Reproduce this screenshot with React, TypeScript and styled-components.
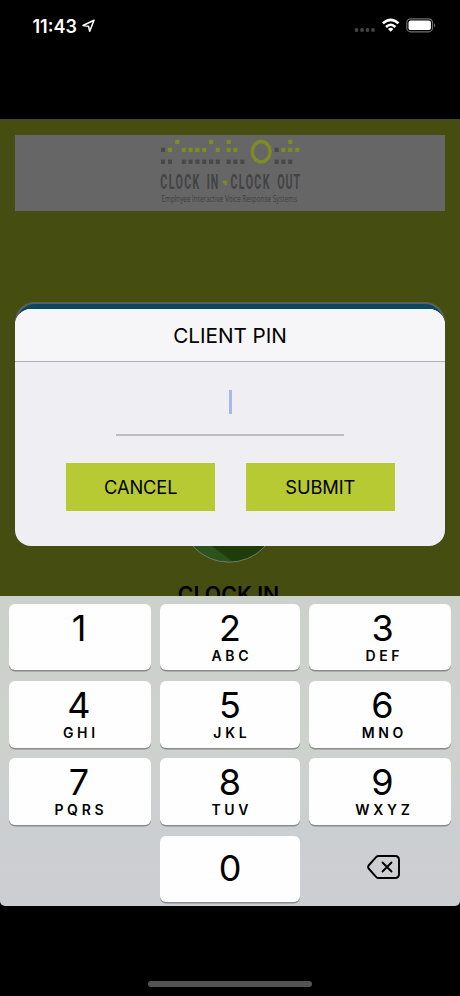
import React from "react";
import styled, { createGlobalStyle } from "styled-components";

const GlobalStyle = createGlobalStyle`
  * { box-sizing: border-box; }
  body { margin: 0; background: #000; }
`;

const Phone = styled.div`
  width: 460px;
  height: 996px;
  display: flex;
  flex-direction: column;
  overflow: hidden;
  background: #000;
  color: #000;
  font-family: Inter, sans-serif;
`;

const StatusBar = styled.header`
  height: 119px;
  flex: none;
  display: flex;
  justify-content: space-between;
  align-items: flex-start;
  padding: 15px 23px 0 32.5px;
  color: #fff;
`;

const StatusGroup = styled.div`
  display: flex;
  align-items: center;
  height: 22px;
`;

const Time = styled.span`
  font-size: 18px;
  font-weight: 600;
  letter-spacing: 0;
  width: 49.5px;
  white-space: nowrap;
`;

const AppScreen = styled.main`
  position: relative;
  height: 477px;
  flex: none;
  overflow: hidden;
  padding: 16px 15px 0;
  background: #454e10;
`;

const Banner = styled.div`
  height: 76px;
  display: flex;
  justify-content: center;
  background: #666;
`;

const LoginCard = styled.section`
  height: 200px;
  margin-top: 91px;
  border: 2px solid #5d6061;
  border-radius: 20px;
  background: #0b475e;
`;

const ClockInBadge = styled.div`
  position: absolute;
  left: 180px;
  top: 345px;
  width: 98px;
  height: 99px;
`;

const ClockInLabel = styled.div`
  position: absolute;
  left: 0;
  right: 3px;
  top: 461px;
  text-align: center;
  font-size: 21.3px;
  line-height: 28px;
  font-weight: 600;
`;

const Dialog = styled.section`
  position: absolute;
  left: 15px;
  right: 15px;
  top: 190px;
  height: 237px;
  overflow: hidden;
  border-radius: 16px;
  background: #efeff3;
  display: flex;
  flex-direction: column;
  align-items: center;
`;

const DialogTitle = styled.h1`
  margin: 0;
  width: 100%;
  height: 53px;
  border-bottom: 1.5px solid #b0b1b3;
  background: #f6f6f9;
  text-align: center;
  font-size: 20.7px;
  font-weight: 400;
  line-height: 53px;
  letter-spacing: -0.05px;
`;

const PinField = styled.div`
  width: 228px;
  height: 74px;
  display: flex;
  justify-content: center;
  padding-top: 28px;
  border-bottom: 2px solid #bcbcc1;
`;

const Caret = styled.span`
  width: 3px;
  height: 24px;
  background: #a9b6ee;
`;

const Actions = styled.div`
  display: flex;
  gap: 30.5px;
  margin: 27px 0 0 1px;
`;

const ActionButton = styled.button`
  width: 149px;
  height: 48px;
  padding: 0;
  border: 0;
  background: #b8ca33;
  color: #000;
  font: 400 18.3px/48px Inter, sans-serif;
  letter-spacing: -0.1px;
`;

const Keyboard = styled.div`
  height: 310px;
  flex: none;
  display: grid;
  grid-template-columns: 142px 140px 142px;
  grid-template-rows: 66px 67px 67px 66px;
  column-gap: 9px;
  row-gap: 10.5px;
  padding: 8px 9px 0;
  border-radius: 0 0 5px 5px;
  background: linear-gradient(#cdd1cc 0%, #cdd2cd 48%, #cccfd1 76%, #cdced2 100%);
`;

const Key = styled.button<{ $plain?: boolean; $column?: number }>`
  ${(p) => (p.$column ? `grid-column: ${p.$column};` : "")}
  display: flex;
  flex-direction: column;
  align-items: center;
  justify-content: ${(p) => (p.$plain ? "center" : "flex-start")};
  padding: ${(p) => (p.$plain ? "0 0 3px 8px" : "0")};
  border: 0;
  border-radius: 6px;
  color: #000;
  background: ${(p) => (p.$plain ? "transparent" : "#fefefe")};
  box-shadow: ${(p) => (p.$plain ? "none" : "0 1.5px 0 #898c8b")};

  &:nth-child(3n + 1):not(:nth-child(10)) { padding-right: 2px; }
  &:nth-child(3n):not(:nth-child(12)) { padding-left: 5px; }
`;

const Digit = styled.span<{ $alone?: boolean }>`
  margin-top: ${(p) => (p.$alone ? "10px" : "2px")};
  font: 400 36px/44px Inter, sans-serif;
  height: 44px;
`;

const Letters = styled.span`
  font: 600 14px/17px Inter, sans-serif;
  letter-spacing: 3.7px;
  margin-right: -3.7px;
  margin-top: -3px;
`;

const HomeArea = styled.footer`
  flex: 1;
  display: flex;
  justify-content: center;
  align-items: flex-end;
  padding-bottom: 9px;
`;

const HomeIndicator = styled.div`
  width: 164px;
  height: 6px;
  border-radius: 3px;
  background: #545454;
`;

const LocationIcon = () => (
  <svg width="13" height="14" viewBox="0 0 13 14">
    <path d="M1 6.5 12 1.2 7.7 12.2 6.5 7.2Z" fill="none" stroke="#fff" strokeWidth="1.5" strokeLinejoin="round" />
  </svg>
);

const StatusIcons = () => (
  <svg width="84" height="22" viewBox="353 15 84 22">
    {[356.5, 362, 367.5, 373].map((x) => (
      <circle key={x} cx={x} cy="30" r="1.9" fill="#454545" />
    ))}
    <g fill="none" stroke="#fff" strokeWidth="2.6">
      <path d="M382.9 23.4Q390.7 16.2 398.5 23.4" />
      <path d="M386 27Q390.7 22.5 395.4 27" />
    </g>
    <path d="M388 29Q390.7 26.7 393.4 29L390.7 31.8Z" fill="#fff" />
    <rect x="406.8" y="18.8" width="25.7" height="13" rx="3.8" fill="none" stroke="#707070" strokeWidth="1.2" />
    <rect x="408.5" y="20.5" width="22.4" height="9.6" rx="2.2" fill="#fff" />
    <path d="M434 23.2Q436.4 25.3 434 27.5Z" fill="#707070" />
  </svg>
);

const GREEN = "#7f8c22";
const GREY = "#484848";
const topSquares = [25.2, 59.1, 76.6, 138.2];
const middleSquares: [number, string][] = [
  [11, GREY], [18, GREEN], [31.8, GREEN], [38.6, GREEN], [45.4, GREEN], [52.2, GREEN],
  [65.8, GREEN], [76.6, GREEN], [83.4, GREEN], [124.6, GREY], [131.4, GREEN], [138.2, GREEN], [145.2, GREEN],
];
const bottomSquares = [11, 18, 31.8, 38.6, 45.4, 52.2, 59.1, 65.8, 76.6, 83.4, 90.4, 124.6, 131.4, 138.2];
const logoWords: [string, number, number][] = [
  ["CLOCK", 10.3, 39],
  ["IN", 56.8, 11.4],
  ["CLOCK", 80.5, 39],
  ["OUT", 127.2, 22.8],
];

const Logo = () => (
  <svg width="160" height="76" viewBox="0 5 160 76">
    {topSquares.map((x) => <rect key={x} x={x} y="9.8" width="4.2" height="4.2" fill={GREEN} />)}
    {middleSquares.map(([x, fill]) => <rect key={x} x={x} y="17.8" width="4" height="4.2" fill={fill} />)}
    {bottomSquares.map((x) => <rect key={x} x={x} y="29.7" width="4" height="4.2" fill={GREY} />)}
    <ellipse cx="111.2" cy="21.7" rx="8.9" ry="10.2" fill="none" stroke={GREEN} strokeWidth="3.4" />
    <g fill="#424245" fontFamily="Roboto, sans-serif" fontWeight="700" fontSize="20.5">
      {logoWords.map(([word, x, width]) => (
        <text key={x} transform={`translate(${x} 59.2) scale(.52 1)`} textLength={width / 0.52} lengthAdjust="spacing">
          {word}
        </text>
      ))}
    </g>
    <path d="M73 50.8H76.8V55.2H74.4V53.2H73Z" fill={GREEN} />
    <text x="11.5" y="71.6" fill="#414141" fontFamily="Open Sans, sans-serif" fontSize="8.3" textLength="135.5" lengthAdjust="spacingAndGlyphs">
      Employee Interactive Voice Response Systems
    </text>
  </svg>
);

const BadgeArt = () => (
  <svg width="98" height="99" viewBox="0 0 98 99">
    <clipPath id="disc"><circle cx="49" cy="49.5" r="48.7" /></clipPath>
    <g clipPath="url(#disc)">
      <rect width="98" height="99" fill="#244910" />
      <path d="M0 40 30 81 54 99H0Z" fill="#2d531d" />
      <path d="M30 80H98V99H55Z" fill="#1e3d09" />
    </g>
    <circle cx="49" cy="49.5" r="48.7" fill="none" stroke="#747b6b" />
  </svg>
);

const DeleteIcon = () => (
  <svg width="34" height="26" viewBox="0 0 34 26" fill="none" stroke="#000" strokeWidth="1.9" strokeLinejoin="round" strokeLinecap="round">
    <path d="M11.5 2H28Q32 2 32 6V20Q32 24 28 24H11.5Q10.2 24 9.3 23.1L1.6 14.5Q.6 13 1.6 11.5L9.3 2.9Q10.2 2 11.5 2Z" />
    <path d="m15.5 8.5 9 9m0-9-9 9" />
  </svg>
);

const keys = [
  ["1", ""], ["2", "ABC"], ["3", "DEF"],
  ["4", "GHI"], ["5", "JKL"], ["6", "MNO"],
  ["7", "PQRS"], ["8", "TUV"], ["9", "WXYZ"],
];

export default function App() {
  return (
    <>
      <GlobalStyle />
      <Phone>
        <StatusBar>
          <StatusGroup><Time>11:43</Time><LocationIcon /></StatusGroup>
          <StatusGroup><StatusIcons /></StatusGroup>
        </StatusBar>
        <AppScreen>
          <Banner><Logo /></Banner>
          <LoginCard />
          <ClockInBadge><BadgeArt /></ClockInBadge>
          <ClockInLabel>CLOCK IN</ClockInLabel>
          <Dialog>
            <DialogTitle>CLIENT PIN</DialogTitle>
            <PinField><Caret /></PinField>
            <Actions>
              <ActionButton>CANCEL</ActionButton>
              <ActionButton>SUBMIT</ActionButton>
            </Actions>
          </Dialog>
        </AppScreen>
        <Keyboard>
          {keys.map(([digit, letters]) => (
            <Key key={digit}>
              <Digit>{digit}</Digit>
              {letters && <Letters>{letters}</Letters>}
            </Key>
          ))}
          <Key $column={2}><Digit $alone>0</Digit></Key>
          <Key $plain aria-label="Delete"><DeleteIcon /></Key>
        </Keyboard>
        <HomeArea><HomeIndicator /></HomeArea>
      </Phone>
    </>
  );
}
